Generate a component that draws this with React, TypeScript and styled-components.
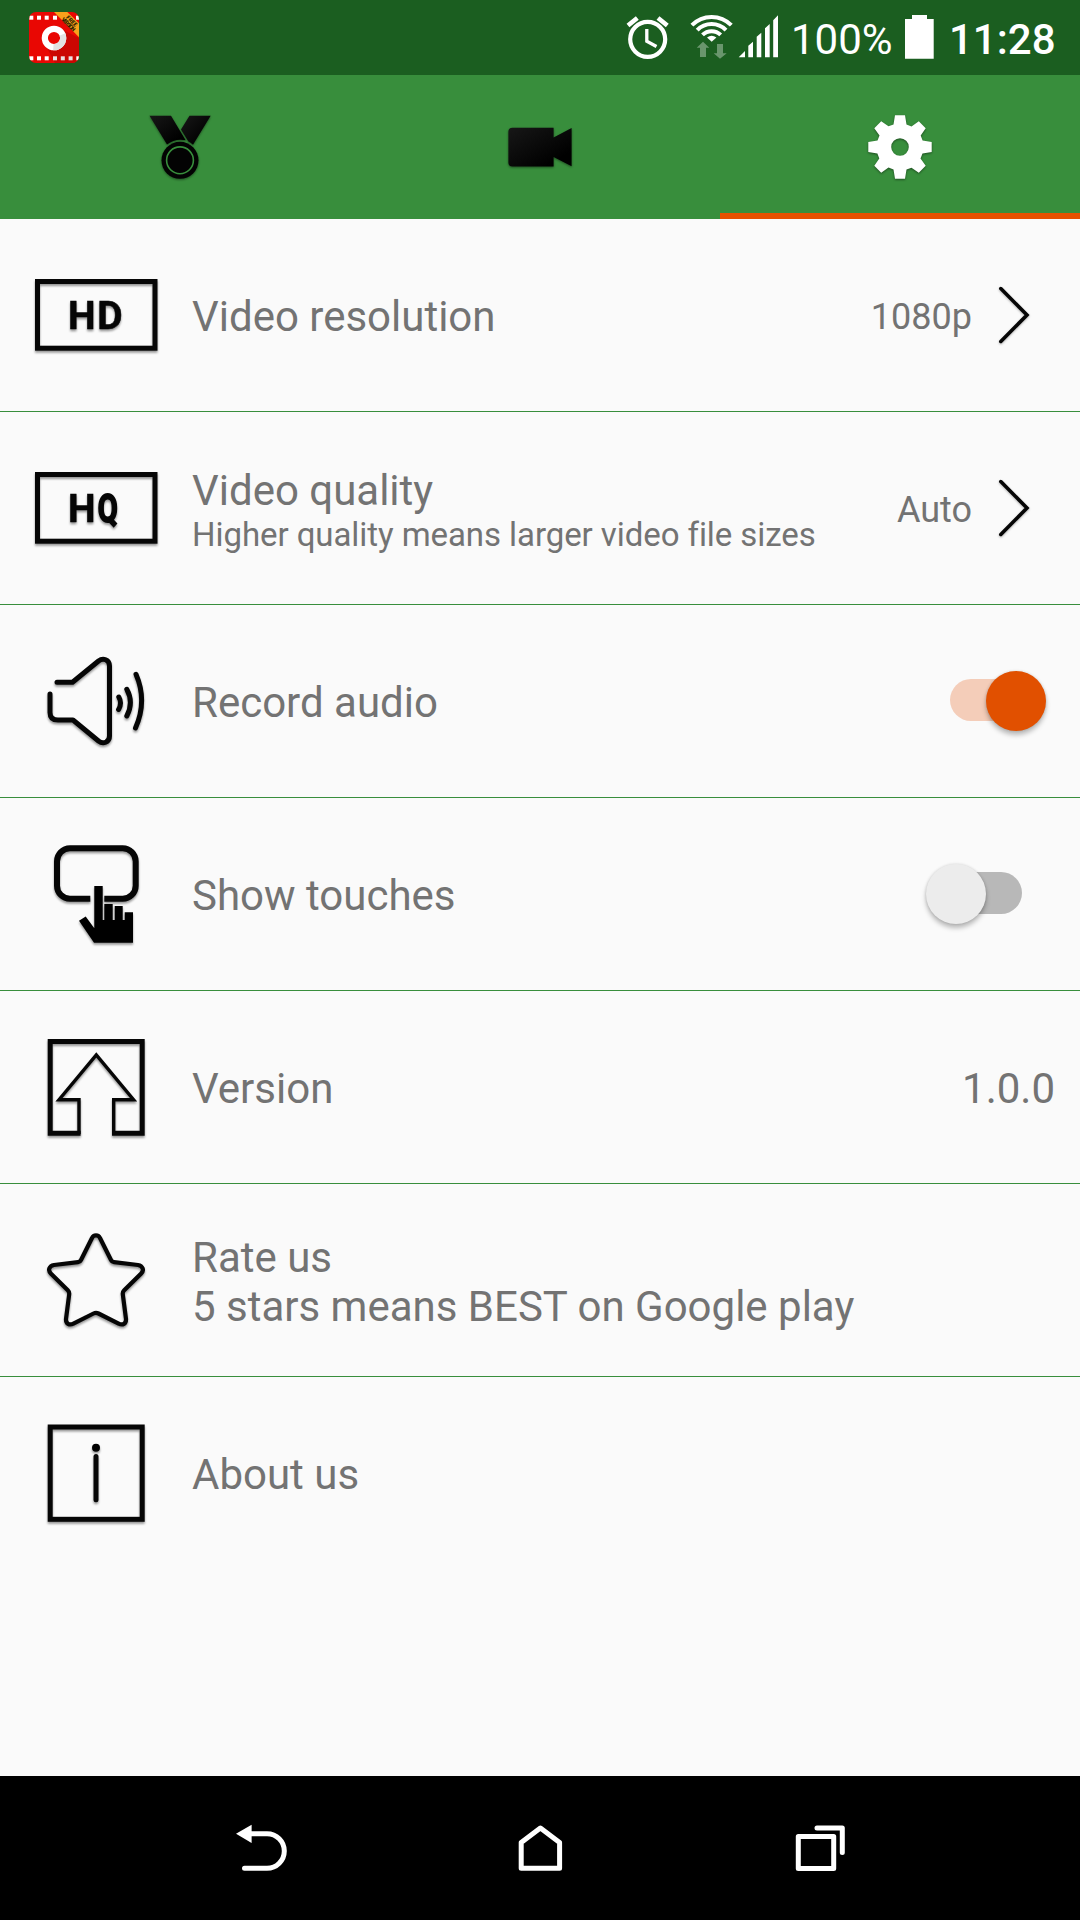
import React from "react";
import styled, { createGlobalStyle } from "styled-components";

const GlobalStyle = createGlobalStyle`
  * { box-sizing: border-box; }
  body { margin: 0; background: #fafafa; }
`;

const Screen = styled.div`
  display: flex;
  flex-direction: column;
  width: 1080px;
  height: 1920px;
  overflow: hidden;
  background: #fafafa;
  color: #737373;
  font-family: Roboto, "Liberation Sans", sans-serif;
  font-size: 42px;
  line-height: 49px;

  svg { display: block; flex: none; }
`;

const StatusBar = styled.header`
  display: flex;
  justify-content: space-between;
  height: 75px;
  padding-left: 29px;
  background: #1b5e20;
  color: #fff;
`;

const StatusGroup = styled.div`
  display: flex;
  align-items: center;
`;

const StatusText = styled.span<{ $width: number; $bold?: boolean }>`
  width: ${(p) => p.$width}px;
  padding-top: 3px;
  font-weight: ${(p) => (p.$bold ? 500 : 400)};
  white-space: nowrap;
`;

const TabBar = styled.nav`
  display: grid;
  grid-template-columns: repeat(3, 1fr);
  height: 144px;
  background: #388e3c;
`;

const Tab = styled.button<{ $active?: boolean }>`
  display: flex;
  align-items: center;
  justify-content: center;
  padding: 0;
  border: 0;
  background: none;
  box-shadow: ${(p) => (p.$active ? "inset 0 -6px 0 #e65100" : "none")};

  svg { filter: drop-shadow(0 1px 1px rgba(0, 0, 0, 0.45)); }
`;

const List = styled.main`
  flex: 1;
`;

const Row = styled.section`
  display: flex;
  align-items: center;
  height: 193px;
  border-bottom: 1px solid #388e3c;

  &:last-child {
    height: 191px;
    border-bottom: 0;
  }
`;

const RowIcon = styled.svg`
  width: 192px;
  height: 192px;
  fill: none;
  stroke: #060606;
  stroke-width: 5px;
  filter: drop-shadow(0 2px 1.3px rgba(0, 0, 0, 0.4));
`;

const IconText = styled.text`
  fill: #060606;
  stroke: #060606;
  stroke-width: 0.5px;
  font-family: Roboto, sans-serif;
  font-size: 39px;
  font-weight: 700;
`;

const Labels = styled.div`
  display: flex;
  flex: 1;
  flex-direction: column;
  padding-top: 3px;
  white-space: nowrap;
`;

const Hint = styled.span`
  font-size: 33px;
  line-height: 39px;
  letter-spacing: -0.07px;
`;

const Value = styled.span<{ $large?: boolean }>`
  padding-top: ${(p) => (p.$large ? 3 : 4)}px;
  padding-right: ${(p) => (p.$large ? 25 : 18)}px;
  font-size: ${(p) => (p.$large ? 42 : 36)}px;
`;

const Chevron = styled.svg`
  width: 90px;
  height: 192px;
  fill: none;
  stroke: #060606;
  stroke-width: 3.6px;
  stroke-linecap: round;
  filter: drop-shadow(0 1.5px 1px rgba(0, 0, 0, 0.3));
`;

const Track = styled.div<{ $on: boolean }>`
  display: flex;
  align-items: center;
  justify-content: ${(p) => (p.$on ? "flex-end" : "flex-start")};
  width: 72px;
  height: 42px;
  margin-right: 58px;
  margin-bottom: 2px;
  border-radius: 21px;
  background: ${(p) => (p.$on ? "#f4cdb9" : "#b8b8b8")};
`;

const Thumb = styled.div<{ $on: boolean }>`
  flex: none;
  width: 60px;
  height: 60px;
  margin: ${(p) => (p.$on ? "1px -23.7px 0 0" : "1px 0 0 -23.7px")};
  border-radius: 50%;
  background: ${(p) => (p.$on ? "#e15000" : "#ececec")};
  box-shadow: 0 4px 5px rgba(0, 0, 0, 0.26), 0 0 3px rgba(0, 0, 0, 0.14);
`;

const NavBar = styled.footer`
  display: grid;
  grid-template-columns: repeat(3, 280px);
  justify-content: center;
  align-items: center;
  justify-items: center;
  height: 144px;
  background: #000;
`;

const NavIcon = styled.svg`
  width: 60px;
  height: 60px;
  fill: none;
  stroke: #fff;
  stroke-width: 5px;
  stroke-linecap: round;
  stroke-linejoin: round;
`;

const BadgeText = styled.text`
  fill: #2b1c00;
  font-family: Roboto, sans-serif;
  font-size: 5.6px;
  font-weight: 900;
  text-anchor: middle;
`;

const AppBadge = () => (
  <svg width="50" height="51" viewBox="29 12 50 51">
    <defs>
      <clipPath id="badge"><rect x="29" y="12" width="50" height="51" rx="7" /></clipPath>
      <clipPath id="ring"><path d="M54 38L66 33H82V66H52Z" /></clipPath>
    </defs>
    <g clipPath="url(#badge)">
      <rect x="29" y="12" width="50" height="51" fill="#e90703" />
      <path d="M63 30L79 38V63H55L47 48Z" fill="#cb0602" />
      {[31.3, 39, 46.7, 55, 78].map((x) => (
        <rect key={x} x={x - 2} y="15.7" width="4" height="4" fill="#fff" />
      ))}
      {[31.3, 39, 46.7, 55, 62.8, 70.6, 78.3].map((x) => (
        <rect key={x} x={x - 2} y="56.3" width="4" height="4" fill={x > 54 && x < 74 ? "#eadfdf" : "#fff"} />
      ))}
      <path d="M54 12H67.3L79 23.3V37.3Z" fill="#f9a01b" />
      <g transform="translate(70 22.8) rotate(45)">
        <BadgeText y="-0.6">FREE</BadgeText>
        <BadgeText y="4.2" textLength="17">VERSION</BadgeText>
      </g>
      <circle cx="54" cy="38" r="9.2" fill="#e90703" stroke="#fff" strokeWidth="6.2" />
      <circle cx="54" cy="38" r="9.2" fill="none" stroke="#e2e2e2" strokeWidth="6.2" clipPath="url(#ring)" />
    </g>
  </svg>
);

const AlarmIcon = () => (
  <svg width="48" height="75" viewBox="624 0 48 75" fill="none" stroke="#fff">
    <circle cx="647.7" cy="39.3" r="17.5" strokeWidth="4.2" />
    <path d="M646.8 29V41.3L656.5 46.5" strokeWidth="3.3" />
    <path d="M628 25.5L637.3 18M658 18L667.3 25.5" strokeWidth="4.6" />
  </svg>
);

const WifiIcon = () => (
  <svg width="66" height="75" viewBox="672 0 66 75">
    <g fill="none" stroke="#fff" strokeWidth="4">
      <path d="M691.9 25.2A27.6 27.6 0 0 1 731.3 25.2" />
      <path d="M697.2 30.2A20 20 0 0 1 726 30.2" />
      <path d="M702.5 34.9A13 13 0 0 1 720.7 34.9" />
    </g>
    <path d="M707 37.6Q711.6 34 716.4 37.6L711.7 41.7Z" fill="#fff" />
    <path
      d="M703 41.7L709.3 47.7H706V57H700V47.7H696.7ZM720 58.7L713.7 53.3H717V44H723V53.3H726.7Z"
      fill="#fff"
      opacity="0.35"
    />
  </svg>
);

const SignalIcon = () => (
  <svg width="53" height="75" viewBox="738 0 53 75">
    <path
      d="M738.7 57.2L745 51V57.2ZM748.3 57.2V45.7L753 41.7V57.2ZM756.7 57.2V36.7L761.3 32.7V57.2ZM765 57.2V28.3L769.7 24V57.2ZM773.2 57.2V20.3L778 15.3V57.2Z"
      fill="#fff"
    />
  </svg>
);

const BatteryIcon = () => (
  <svg width="44" height="75" viewBox="905 0 44 75">
    <path d="M912 15H927V19H933.7V58.7H905V19H912Z" fill="#fff" />
  </svg>
);

const MedalIcon = () => (
  <svg width="72" height="72" viewBox="144 111 72 72">
    <defs>
      <linearGradient id="sheen" x1="0" y1="0" x2="1" y2="1">
        <stop offset="0" stopColor="#171717" />
        <stop offset="0.8" stopColor="#000" />
      </linearGradient>
    </defs>
    <path d="M149.5 115.7H171L185.7 140.2Q175 138 167 144.6Z" fill="url(#sheen)" />
    <path d="M189.5 115.7H210.7L193 144.8Q190.5 142.4 188.4 141.4L181 129.5Z" fill="url(#sheen)" />
    <circle cx="180" cy="160.3" r="18.5" fill="#030303" />
    <circle cx="180" cy="160.3" r="13.4" fill="none" stroke="#388e3c" strokeWidth="1.6" />
  </svg>
);

const CameraIcon = () => (
  <svg width="72" height="72" viewBox="504 111 72 72">
    <path
      d="M512.5 127.7H553.6V137.6L571.6 128V166.3L553.6 157V166.5H512.5Q508.4 166.5 508.4 162.5V131.7Q508.4 127.7 512.5 127.7Z"
      fill="url(#sheen)"
    />
  </svg>
);

const gearQuarter = "-5,-31.7 -6.5,-22.6 -11.5,-20.7 -18.8,-25.7 -25.7,-18.8 -20.5,-11.5 -22.5,-6.5 -31.7,-5";

const gearPath = () => {
  const quarter = gearQuarter.split(" ").map((p) => p.split(",").map(Number));
  const points: number[][] = [];
  for (let turn = 0; turn < 4; turn += 1) {
    quarter.forEach(([x, y]) => {
      let px = x;
      let py = y;
      for (let i = 0; i < turn; i += 1) [px, py] = [py, -px];
      points.push([px, py]);
    });
  }
  return `M${points.map((p) => p.join(" ")).join("L")}ZM8.8 0A8.8 8.8 0 1 0 -8.8 0A8.8 8.8 0 1 0 8.8 0Z`;
};

const GearIcon = () => (
  <svg width="72" height="72" viewBox="-36 -36 72 72">
    <path d={gearPath()} fill="#fff" fillRule="evenodd" />
  </svg>
);

const ChevronRight = () => (
  <Chevron viewBox="0 0 90 192">
    <path d="M10.8 69.6L37 96L10.8 122.4" />
  </Chevron>
);

const Switch = ({ on }: { on: boolean }) => (
  <Track $on={on}>
    <Thumb $on={on} />
  </Track>
);

const HdIcon = () => (
  <RowIcon viewBox="0 0 192 192">
    <rect x="37.5" y="62.5" width="117.5" height="66.7" />
    <IconText x="68" y="110">
      H<tspan dx="1.6">D</tspan>
    </IconText>
  </RowIcon>
);

const HqIcon = () => (
  <RowIcon viewBox="0 0 192 192">
    <rect x="37.5" y="62.5" width="117.5" height="66.7" />
    <IconText x="68" y="110">
      H<tspan dx="2.2" textLength="20" lengthAdjust="spacingAndGlyphs" strokeWidth="1.8">Q</tspan>
    </IconText>
  </RowIcon>
);

const SpeakerIcon = () => (
  <RowIcon viewBox="0 0 192 192" strokeLinecap="round" strokeLinejoin="round">
    <path d="M57 77.3H72.5L98.5 56C103 52.5 109.5 54.5 109.5 61V131C109.5 137.5 103 139.5 98.5 136L73 115H58Q50 115 50 107.5V89" />
    <path d="M118.8 92Q122.3 98 118.6 104.5M126.8 84.3Q134 97.5 126.8 111M136 69.3Q147.5 96 135.5 123" />
  </RowIcon>
);

const TouchIcon = () => (
  <RowIcon viewBox="0 0 192 192">
    <path
      d="M90.3 100.7H70A13 13 0 0 1 57 87.7V63.3A13 13 0 0 1 70 50.3H122.7A13 13 0 0 1 135.7 63.3V87.7A13 13 0 0 1 122.7 100.7H104.3"
      strokeWidth="6"
    />
    <path
      d="M94.3 88H102.7V122H104.3V106H112.7V122H114.7V108H122.7V122H124.7V114.3H133V144.7H94L79 122.7L85.7 118.5L94.3 130.3Z"
      fill="#000"
      stroke="none"
    />
  </RowIcon>
);

const ArrowOutline = styled.path`
  stroke-width: 3.4px;
`;

const StarOutline = styled.path`
  stroke-width: 4.2px;
`;

const VersionIcon = () => (
  <RowIcon viewBox="0 0 192 192">
    <path d="M80.6 142.2H50.2V50.5H142.2V142.2H112" />
    <ArrowOutline d="M79 143V108.7H59L96.3 63.8L133.6 108.7H113.7V143" />
  </RowIcon>
);

const StarIcon = () => (
  <RowIcon viewBox="0 0 192 192" strokeLinejoin="round">
    <StarOutline d="M92 54C93.5 50.5 98.5 50.5 100 54L111 76Q112 78 114 78.2L138 81C142.8 81.8 144.4 86.2 141.2 89.5L124.2 106.3Q122.5 108 122.8 110.3L126 135C126.3 139.7 122.6 141.7 118.6 139.6L98.5 129.5Q96 128.2 93.5 129.5L73.4 139.6C69.4 141.7 65.7 139.7 66 135L69.2 110.3Q69.5 108 67.8 106.3L50.8 89.5C47.6 86.2 49.2 81.8 54 81L78 78.2Q80 78 81 76Z" />
  </RowIcon>
);

const InfoIcon = () => (
  <RowIcon viewBox="0 0 192 192" strokeLinecap="round">
    <rect x="50.2" y="50" width="92" height="92.3" />
    <path d="M96 79.5V122.8" />
    <circle cx="96" cy="70.7" r="4" fill="#000" stroke="none" />
  </RowIcon>
);

export default function App() {
  return (
    <Screen>
      <GlobalStyle />
      <StatusBar>
        <StatusGroup>
          <AppBadge />
        </StatusGroup>
        <StatusGroup>
          <AlarmIcon />
          <WifiIcon />
          <SignalIcon />
          <StatusText $width={114}>100%</StatusText>
          <BatteryIcon />
          <StatusText $width={131} $bold>11:28</StatusText>
        </StatusGroup>
      </StatusBar>
      <TabBar>
        <Tab><MedalIcon /></Tab>
        <Tab><CameraIcon /></Tab>
        <Tab $active><GearIcon /></Tab>
      </TabBar>
      <List>
        <Row>
          <HdIcon />
          <Labels>Video resolution</Labels>
          <Value>1080p</Value>
          <ChevronRight />
        </Row>
        <Row>
          <HqIcon />
          <Labels>
            Video quality
            <Hint>Higher quality means larger video file sizes</Hint>
          </Labels>
          <Value>Auto</Value>
          <ChevronRight />
        </Row>
        <Row>
          <SpeakerIcon />
          <Labels>Record audio</Labels>
          <Switch on />
        </Row>
        <Row>
          <TouchIcon />
          <Labels>Show touches</Labels>
          <Switch on={false} />
        </Row>
        <Row>
          <VersionIcon />
          <Labels>Version</Labels>
          <Value $large>1.0.0</Value>
        </Row>
        <Row>
          <StarIcon />
          <Labels>
            <span>Rate us</span>
            <span>5 stars means BEST on Google play</span>
          </Labels>
        </Row>
        <Row>
          <InfoIcon />
          <Labels>About us</Labels>
        </Row>
      </List>
      <NavBar>
        <NavIcon viewBox="230 1818 60 60">
          <path d="M250 1833.7H267A17.3 17.3 0 0 1 267 1868.3H244.5" />
          <path d="M236 1833.7L251.6 1824.7V1843Z" fill="#fff" stroke="none" />
        </NavIcon>
        <NavIcon viewBox="510 1818 60 60">
          <path d="M521.2 1868.3V1842.5L540.4 1828L559.6 1842.5V1868.3Z" />
        </NavIcon>
        <NavIcon viewBox="790 1818 60 60">
          <rect x="798.3" y="1836.5" width="35.4" height="32" />
          <path d="M817 1828H842.3V1852.5" />
        </NavIcon>
      </NavBar>
    </Screen>
  );
}
